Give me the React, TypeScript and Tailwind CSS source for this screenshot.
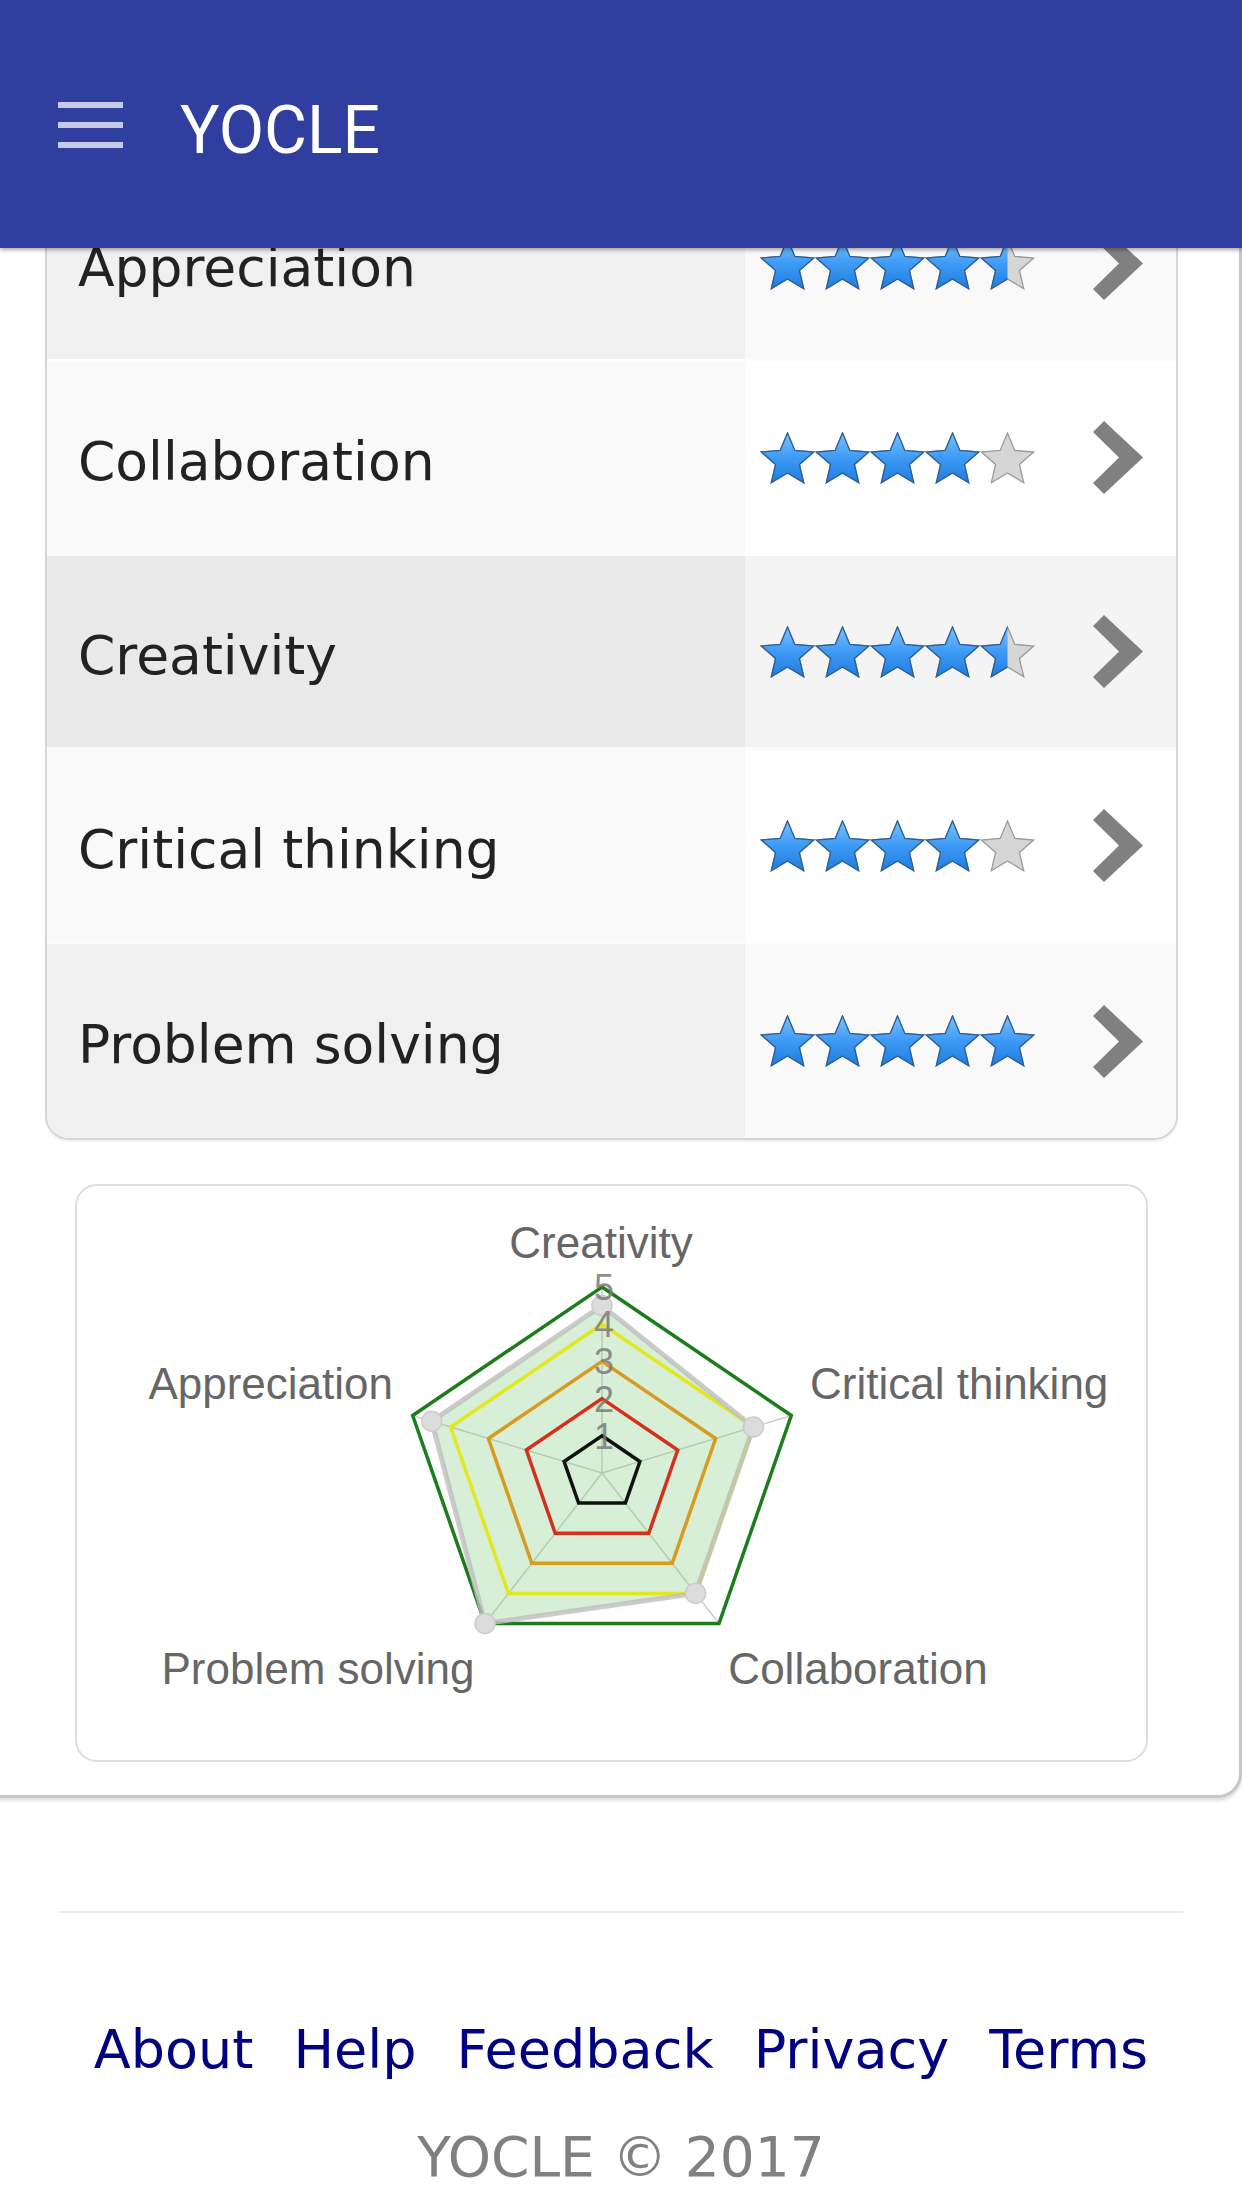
import React, { useId } from "react";

type Skill = { name: string; rating: number; left: string; right: string };

const skills: Skill[] = [
  { name: "Appreciation", rating: 4.5, left: "bg-[#f0f0f0]", right: "bg-[#f9f9f9]" },
  { name: "Collaboration", rating: 4, left: "bg-[#f9f9f9]", right: "bg-white" },
  { name: "Creativity", rating: 4.5, left: "bg-[#e9e9e9]", right: "bg-[#f4f4f4]" },
  { name: "Critical thinking", rating: 4, left: "bg-[#f9f9f9]", right: "bg-white" },
  { name: "Problem solving", rating: 5, left: "bg-[#f0f0f0]", right: "bg-[#f9f9f9]" },
];

function starPoints(cx: number, cy: number, R: number, r: number) {
  const pts: string[] = [];
  for (let i = 0; i < 10; i++) {
    const a = -Math.PI / 2 + (i * Math.PI) / 5;
    const rad = i % 2 === 0 ? R : r;
    pts.push(`${(cx + rad * Math.cos(a)).toFixed(1)},${(cy + rad * Math.sin(a)).toFixed(1)}`);
  }
  return pts.join(" ");
}

const STAR = starPoints(27.5, 28.5, 27.5, 12.5);

function Star({ fill }: { fill: number }) {
  const id = useId().replace(/:/g, "");
  return (
    <svg width="55" height="52" viewBox="0 0 55 52" className="block">
      <defs>
        <linearGradient id={`g${id}`} x1="0" y1="0" x2="0" y2="1">
          <stop offset="0" stopColor="#7cc2ff" />
          <stop offset="0.5" stopColor="#3d9af5" />
          <stop offset="1" stopColor="#1f7de0" />
        </linearGradient>
        <clipPath id={`c${id}`}>
          <rect x="0" y="0" width={55 * fill} height="52" />
        </clipPath>
      </defs>
      <polygon points={STAR} fill="#d6d6d6" stroke="#9a9a9a" strokeWidth="1.3" />
      {fill > 0 && (
        <polygon
          points={STAR}
          fill={`url(#g${id})`}
          stroke="#2c5d96"
          strokeWidth="1.3"
          clipPath={`url(#c${id})`}
        />
      )}
    </svg>
  );
}

function Stars({ rating }: { rating: number }) {
  return (
    <div className="flex">
      {[0, 1, 2, 3, 4].map((i) => (
        <Star key={i} fill={Math.max(0, Math.min(1, rating - i))} />
      ))}
    </div>
  );
}

function Chevron() {
  return (
    <svg width="50" height="73" viewBox="0 0 50 73" className="block">
      <polygon points="0,11 11,0 50,36.5 11,73 0,62 26,36.5" fill="#808080" />
    </svg>
  );
}

// radar geometry, in chart-card coordinates
const CX = 525;
const CY = 287;
const RX = 199;
const RY = 186;
const axes = ["Creativity", "Critical thinking", "Collaboration", "Problem solving", "Appreciation"];
const values = [4.5, 4, 4, 5, 4.5];

function pt(i: number, v: number) {
  const a = -Math.PI / 2 + (i * 2 * Math.PI) / 5;
  return [CX + RX * (v / 5) * Math.cos(a), CY + RY * (v / 5) * Math.sin(a)];
}

function ring(v: number) {
  return [0, 1, 2, 3, 4].map((i) => pt(i, v).map((n) => n.toFixed(1)).join(",")).join(" ");
}

const levelColors = ["#111111", "#d4301a", "#d99a22", "#e3e81e", "#1d7d1d"];

function Radar() {
  const dataPts = values.map((v, i) => pt(i, v));
  const dataStr = dataPts.map((p) => p.map((n) => n.toFixed(1)).join(",")).join(" ");
  return (
    <svg width="1069" height="574" viewBox="0 0 1069 574" className="block">
      {[0, 1, 2, 3, 4].map((i) => {
        const [x, y] = pt(i, 5);
        return <line key={i} x1={CX} y1={CY} x2={x} y2={y} stroke="#cfcfcf" strokeWidth="1.5" />;
      })}
      <polygon points={dataStr} fill="rgba(110,195,110,0.28)" stroke="none" />
      {[1, 2, 3, 4, 5].map((v) => (
        <polygon key={v} points={ring(v)} fill="none" stroke={levelColors[v - 1]} strokeWidth="3.5" />
      ))}
      <polygon points={dataStr} fill="none" stroke="rgba(190,190,190,0.8)" strokeWidth="5" />
      {dataPts.map(([x, y], i) => (
        <circle key={i} cx={x} cy={y} r="10" fill="#dcdcdc" stroke="#cccccc" strokeWidth="1.5" />
      ))}
      {[1, 2, 3, 4, 5].map((v) => (
        <text
          key={v}
          x={CX + 2}
          y={CY - (RY * v) / 5 + 13}
          textAnchor="middle"
          fontSize="36"
          fill="#7a7a7a"
          fillOpacity="0.85"
          fontFamily="'Liberation Sans', Arial, sans-serif"
        >
          {v}
        </text>
      ))}
      <g fontFamily="'Liberation Sans', Arial, sans-serif" fontSize="44" fill="#666666">
        <text x="524" y="72" textAnchor="middle">{axes[0]}</text>
        <text x="733" y="213">{axes[1]}</text>
        <text x="781" y="498" textAnchor="middle">{axes[2]}</text>
        <text x="241" y="498" textAnchor="middle">{axes[3]}</text>
        <text x="316" y="213" textAnchor="end">{axes[4]}</text>
      </g>
    </svg>
  );
}

export default function App() {
  const body = { fontFamily: "'DejaVu Sans', Verdana, sans-serif" };
  return (
    <div className="w-[1242px] h-[2208px] overflow-hidden bg-white" style={body}>
      <header className="relative z-10 h-[248px] bg-[#303f9f] flex items-center shadow-[0_2px_4px_rgba(0,0,0,0.35)]">
        <div className="ml-[58px] mt-[2px] flex flex-col gap-[14px]">
          <span className="block h-[6px] w-[65px] bg-[#c5cae9]" />
          <span className="block h-[6px] w-[65px] bg-[#c5cae9]" />
          <span className="block h-[6px] w-[65px] bg-[#c5cae9]" />
        </div>
        <h1
          className="ml-[57px] text-[66px] leading-none text-white mt-[14px]"
          style={{ fontFamily: "Roboto, 'Liberation Sans', sans-serif" }}
        >
          YOCLE
        </h1>
      </header>

      <main className="-mt-[80px]">
        <div className="-ml-[20px] w-[1262px] border-r-[3px] border-b-[3px] border-[#c6c6c6] rounded-br-[24px] pb-[33px] shadow-[0_3px_3px_rgba(0,0,0,0.12)]">
          <div className="ml-[65px] w-[1133px] border-x-2 border-b-2 border-[#d6d6d6] rounded-b-[24px] overflow-hidden shadow-[0_2px_2px_rgba(0,0,0,0.06)]">
            {skills.map((s, i) => (
              <div
                key={s.name}
                className={`flex h-[194px] ${i < skills.length - 1 ? "border-b-[3px] border-[#fcfcfc]" : ""}`}
              >
                <div className={`w-[698px] flex items-center pl-[31px] pt-[8px] ${s.left}`}>
                  <span className="text-[53.5px] text-[#222222] leading-none">{s.name}</span>
                </div>
                <div className={`flex-1 flex items-center pl-[15px] pr-[33px] ${s.right}`}>
                  <Stars rating={s.rating} />
                  <div className="ml-auto">
                    <Chevron />
                  </div>
                </div>
              </div>
            ))}
          </div>

          <div className="ml-[95px] mt-[44px] w-[1073px] h-[578px] border-2 border-[#dddddd] rounded-[22px] bg-white">
            <Radar />
          </div>
        </div>

        <div className="ml-[59px] mt-[113px] w-[1124px] h-[2px] bg-[#ececec]" />

        <nav className="mt-[104px] flex justify-center gap-[40px] text-[54px] leading-[65px] text-[#000080]">
          <a href="#">About</a>
          <a href="#">Help</a>
          <a href="#">Feedback</a>
          <a href="#">Privacy</a>
          <a href="#">Terms</a>
        </nav>

        <p className="mt-[43px] text-center text-[55px] leading-[65px] text-[#808080]">YOCLE © 2017</p>
      </main>
    </div>
  );
}
